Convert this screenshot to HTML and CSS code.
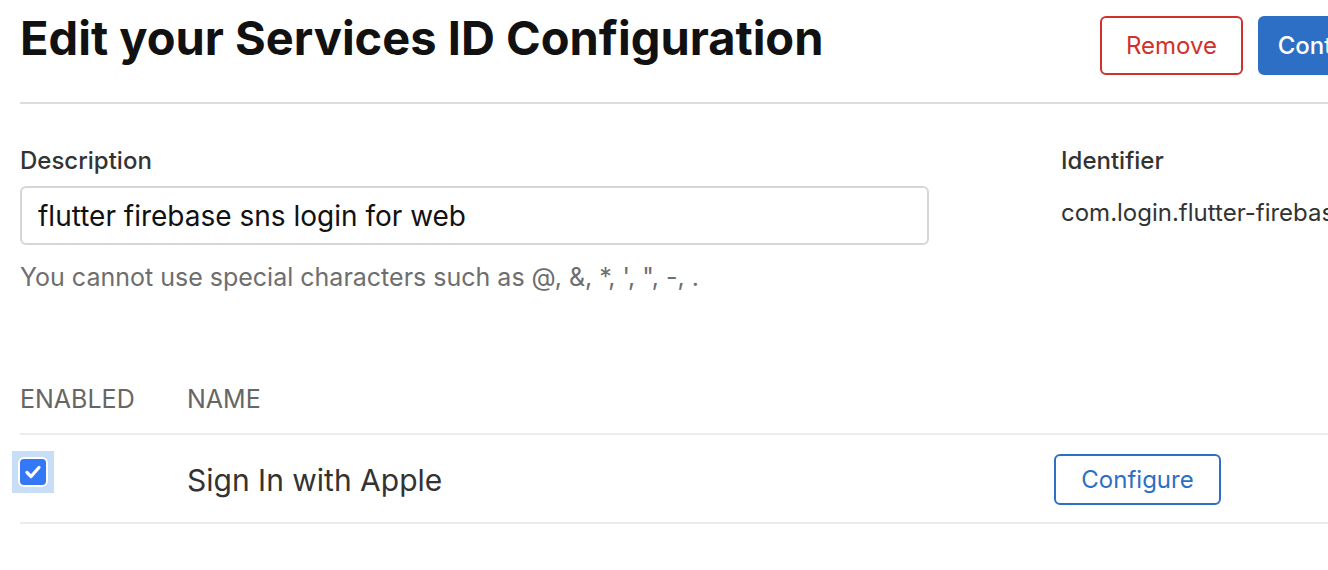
FILE: index.html
```html
<!DOCTYPE html>
<html lang="en">
<head>
<meta charset="utf-8">
<title>Edit your Services ID Configuration</title>
<link rel="stylesheet" href="styles.css">
</head>
<body>
<div class="page">
  <header class="header">
    <h1 class="title">Edit your Services ID Configuration</h1>
    <div class="actions">
      <button class="btn btn-remove">Remove</button>
      <button class="btn btn-primary">Continue</button>
    </div>
  </header>
  <div class="divider"></div>
  <section class="form">
    <div class="field">
      <div class="label">Description</div>
      <div class="input">flutter firebase sns login for web</div>
      <div class="help">You cannot use special characters such as @, &amp;, *, ', ", -, .</div>
    </div>
    <div class="field">
      <div class="label">Identifier</div>
      <div class="value">com.login.flutter-firebase-sns-login</div>
    </div>
  </section>
  <section class="table">
    <div class="thead">
      <div class="col-enabled">ENABLED</div>
      <div class="col-name">NAME</div>
    </div>
    <div class="row">
      <div class="col-enabled">
        <span class="check-ring">
          <span class="check">
            <svg viewBox="0 0 26 26" width="26" height="26"><path d="M7 13.5 L11 17.5 L19 8.5" fill="none" stroke="#fff" stroke-width="3.2" stroke-linecap="round" stroke-linejoin="round"/></svg>
          </span>
        </span>
      </div>
      <div class="col-name name">Sign In with Apple</div>
      <div class="col-action"><button class="btn btn-outline">Configure</button></div>
    </div>
  </section>
</div>
</body>
</html>
```
FILE: styles.css
```css
html, body {
  margin: 0;
  padding: 0;
  background: #fff;
  overflow: hidden;
}
body {
  font-family: Inter, "Liberation Sans", Arial, sans-serif;
  color: #333;
}
.page {
  width: 1381px;
  margin-left: 20px;
}
.header {
  display: flex;
  justify-content: space-between;
  align-items: flex-start;
  padding-top: 16px;
  height: 59px;
}
.title {
  margin: 0;
  font-size: 47px;
  line-height: 46px;
  font-weight: 700;
  color: #111;
  margin-top: -1px;
}
.actions {
  display: flex;
  gap: 15px;
}
.btn {
  font-family: inherit;
  font-size: 24px;
  height: 59px;
  border-radius: 6px;
  padding: 0;
  background: #fff;
  cursor: pointer;
}
.btn-remove {
  width: 143px;
  border: 2px solid #d0312d;
  color: #d0312d;
}
.btn-primary {
  width: 143px;
  border: 2px solid #2d6fc4;
  background: #2d6fc4;
  color: #fff;
  font-weight: 500;
}
.btn-outline {
  width: 167px;
  height: 51px;
  border: 2px solid #2d6fc4;
  color: #2d6fc4;
}
.divider {
  margin-top: 27px;
  height: 2px;
  background: #dcdcdc;
  margin-right: -100px;
}
.form {
  display: grid;
  grid-template-columns: 1041px 1fr;
  margin-top: 42px;
}
.label {
  font-size: 24px;
  line-height: 30px;
  font-weight: 500;
  color: #333;
}
.input {
  margin-top: 10px;
  width: 909px;
  height: 59px;
  box-sizing: border-box;
  border: 2px solid #d6d6d6;
  border-radius: 6px;
  padding: 0 16px;
  display: flex;
  align-items: center;
  font-size: 28px;
  color: #111;
}
.help {
  margin-top: 17px;
  font-size: 25px;
  line-height: 30px;
  color: #6e6e6e;
}
.value {
  margin-top: 22px;
  font-size: 24px;
  line-height: 30px;
  color: #333;
  white-space: nowrap;
}
.table {
  margin-top: 92px;
  margin-right: -100px;
}
.thead {
  display: flex;
  align-items: flex-start;
  height: 49px;
  line-height: 30px;
  font-size: 25px;
  color: #666;
  border-bottom: 2px solid #ececec;
}
.row {
  display: flex;
  align-items: center;
  height: 87px;
  border-bottom: 2px solid #ececec;
}
.col-enabled {
  width: 167px;
  flex: none;
}
.col-name {
  width: 867px;
  flex: none;
}
.name {
  font-size: 30px;
  color: #333;
  margin-top: 2px;
}
.col-action {
  flex: 1;
  padding-top: 2px;
}
.check-ring {
  display: inline-flex;
  align-items: center;
  justify-content: center;
  width: 42px;
  height: 42px;
  margin-left: -8px;
  background: #c8ddf8;
  vertical-align: middle;
  position: relative;
  top: -7px;
}
.check {
  display: block;
  width: 26px;
  height: 26px;
  border-radius: 4px;
  background: #3478f6;
  box-shadow: 0 0 0 2px #fff;
}
.check svg {
  display: block;
}
```
